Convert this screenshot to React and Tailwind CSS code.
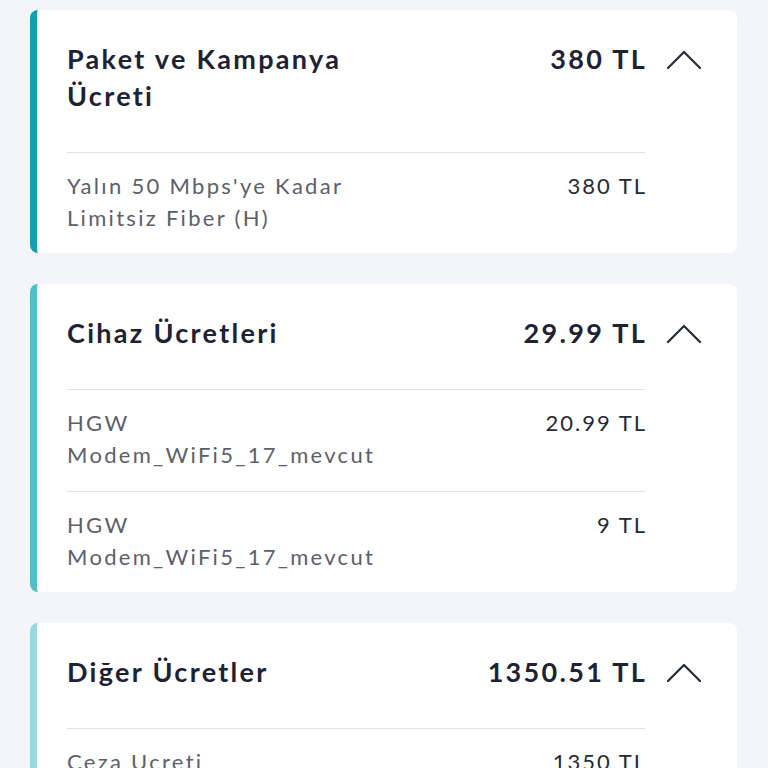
const sections = [
  {
    title: 'Paket ve Kampanya Ücreti',
    total: '380 TL',
    bar: 'border-[#12a0ab]',
    items: [{ name: "Yalın 50 Mbps'ye Kadar Limitsiz Fiber (H)", price: '380 TL' }],
  },
  {
    title: 'Cihaz Ücretleri',
    total: '29.99 TL',
    bar: 'border-[#4fc0c6]',
    items: [
      { name: 'HGW Modem_WiFi5_17_mevcut', price: '20.99 TL' },
      { name: 'HGW Modem_WiFi5_17_mevcut', price: '9 TL' },
    ],
  },
  {
    title: 'Diğer Ücretler',
    total: '1350.51 TL',
    bar: 'border-[#9ad9df]',
    items: [{ name: 'Ceza Ucreti', price: '1350 TL' }],
  },
];

function Chevron() {
  return (
    <svg width="34" height="20" viewBox="0 0 34 20" fill="none" className="mt-[8px]">
      <polyline points="1,18 17,2 33,18" stroke="#262a36" strokeWidth="2.2" strokeLinecap="round" strokeLinejoin="round" />
    </svg>
  );
}

function Section({ s }) {
  return (
    <div className={`flex bg-white rounded-lg border-l-[7px] ${s.bar}`}>
      <div className="flex-1 pl-[30px] pt-[30px] pb-[19px]">
        <div className="flex justify-between items-start gap-6">
          <h2 className="text-[27px] leading-[37px] font-bold text-[#1e2235] max-w-[320px] tracking-[2.3px]">{s.title}</h2>
          <span className="text-[27px] leading-[37px] font-bold text-[#1e2235] whitespace-nowrap tracking-[2.3px] -mr-[2px]">{s.total}</span>
        </div>
        <div className="mt-[38px]">
          {s.items.map((it, i) => (
            <div key={i} className="border-t border-[#e2e3e6] pt-[17px] pb-[20px] last:pb-0 flex justify-between items-start gap-6">
              <span className="text-[22px] leading-[32px] text-[#5c606b] max-w-[345px] tracking-[2.3px]">{it.name}</span>
              <span className="text-[22px] leading-[32px] text-[#262a36] whitespace-nowrap tracking-[2px] -mr-[2px]">{it.price}</span>
            </div>
          ))}
        </div>
      </div>
      <div className="w-[92px] pl-[22px] pt-[32px] shrink-0">
        <Chevron />
      </div>
    </div>
  );
}

export default function App() {
  return (
    <div className="min-h-screen bg-[#f4f5f8] pt-[10px] pl-[30px] pr-[31px] flex flex-col gap-[31px] pb-10" style={{ fontFamily: 'Lato, "Noto Sans", sans-serif' }}>
      {sections.map((s, i) => (
        <Section key={i} s={s} />
      ))}
    </div>
  );
}
